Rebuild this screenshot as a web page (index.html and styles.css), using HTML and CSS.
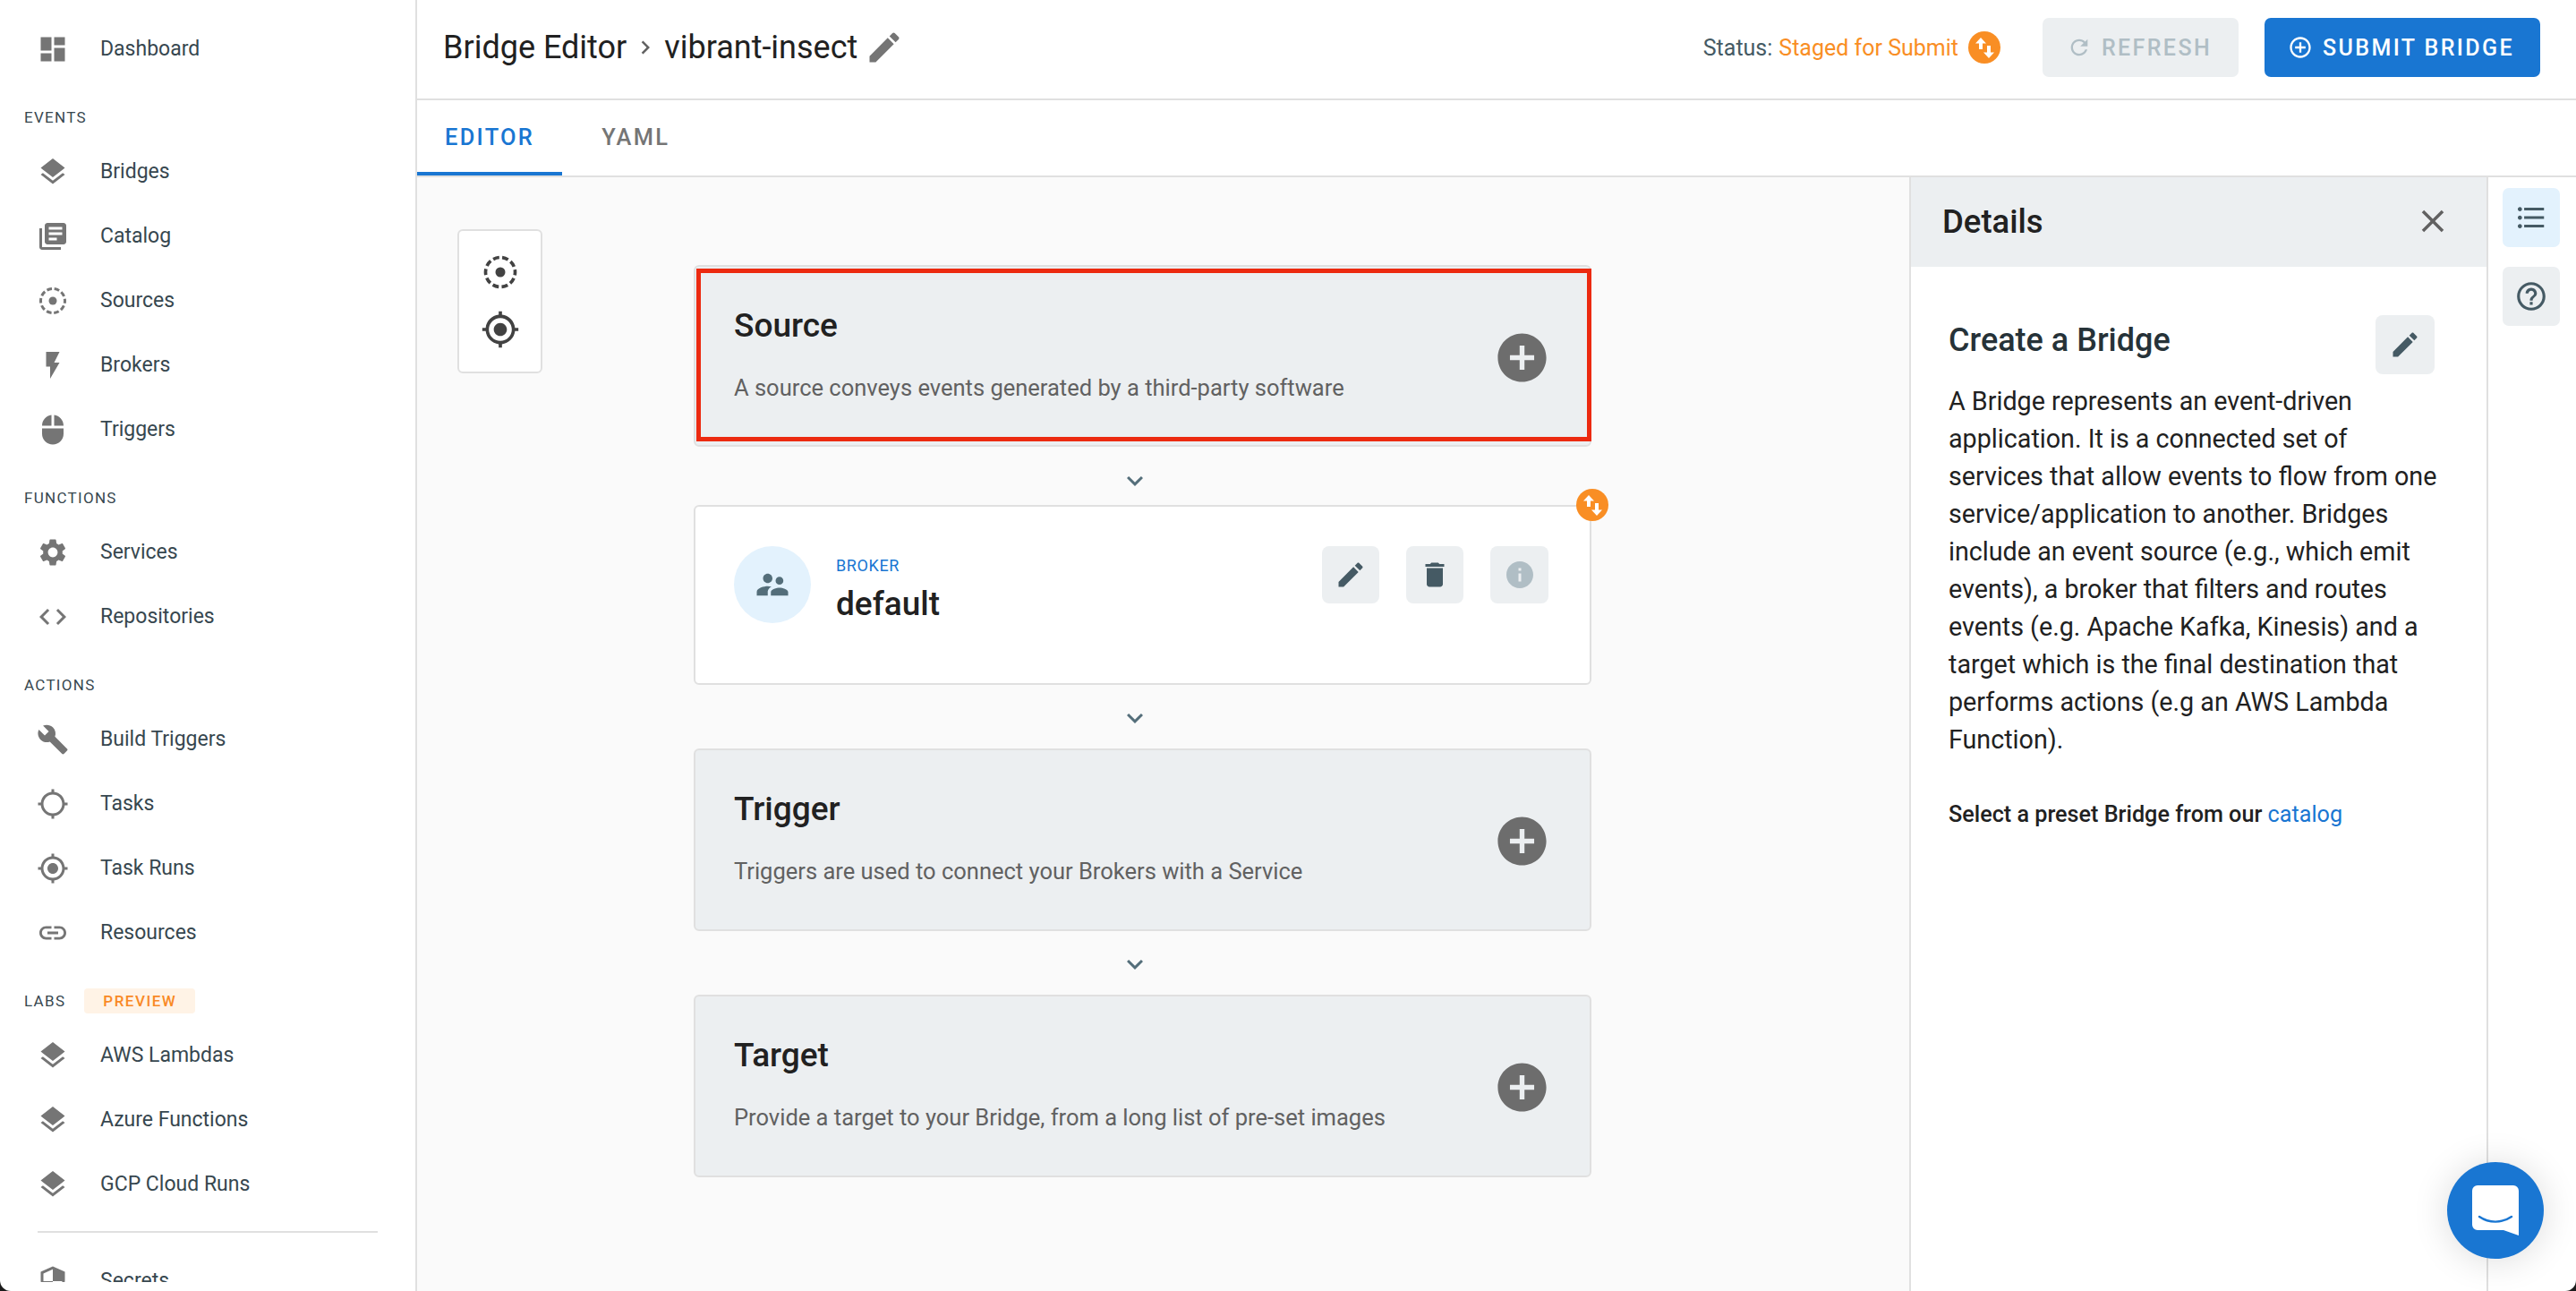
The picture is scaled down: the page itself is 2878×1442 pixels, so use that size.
FILE: index.html
```html
<!DOCTYPE html>
<html lang="en">
<head>
<meta charset="utf-8">
<title>Bridge Editor</title>
<link rel="stylesheet" href="styles.css">
</head>
<body>
<svg class="sprite" aria-hidden="true">
  <symbol id="i-dashboard" viewBox="0 0 24 24"><path d="M3 13h8V3H3v10zm0 8h8v-6H3v6zm10 0h8V11h-8v10zm0-18v6h8V3h-8z"/></symbol>
  <symbol id="i-layers" viewBox="0 0 24 24"><path d="M11.99 18.54l-7.37-5.73L3 14.07l9 7 9-7-1.63-1.27-7.38 5.74zM12 16l7.36-5.73L21 9l-9-7-9 7 1.63 1.27L12 16z"/></symbol>
  <symbol id="i-books" viewBox="0 0 24 24"><path d="M4 6H2v14c0 1.1.9 2 2 2h14v-2H4V6zm16-4H8c-1.1 0-2 .9-2 2v12c0 1.1.9 2 2 2h12c1.1 0 2-.9 2-2V4c0-1.1-.9-2-2-2zm-1 9H9V9h10v2zm-4 4H9v-2h6v2zm4-8H9V5h10v2z"/></symbol>
  <symbol id="i-source" viewBox="0 0 24 24"><circle cx="12" cy="12" r="9" fill="none" stroke="currentColor" stroke-width="2" stroke-dasharray="3.8 1.85" stroke-dashoffset="1.9"/><circle cx="12" cy="12" r="3"/></symbol>
  <symbol id="i-flash" viewBox="0 0 24 24"><path d="M7 2v11h3v9l7-12h-4l4-8z"/></symbol>
  <symbol id="i-mouse" viewBox="0 0 24 24"><path d="M13 1.07V9h7c0-4.08-3.05-7.44-7-7.93zM4 15c0 4.42 3.58 8 8 8s8-3.58 8-8v-4H4v4zm7-13.93C7.05 1.56 4 4.92 4 9h7V1.07z"/></symbol>
  <symbol id="i-gear" viewBox="0 0 24 24"><path d="M19.14 12.94c.04-.3.06-.61.06-.94 0-.32-.02-.64-.07-.94l2.03-1.58c.18-.14.23-.41.12-.61l-1.92-3.32c-.12-.22-.37-.29-.59-.22l-2.39.96c-.5-.38-1.03-.7-1.62-.94l-.36-2.54c-.04-.24-.24-.41-.48-.41h-3.84c-.24 0-.43.17-.47.41l-.36 2.54c-.59.24-1.13.57-1.62.94l-2.39-.96c-.22-.08-.47 0-.59.22L2.74 8.87c-.12.21-.08.47.12.61l2.03 1.58c-.05.3-.09.63-.09.94s.02.64.07.94l-2.03 1.58c-.18.14-.23.41-.12.61l1.92 3.32c.12.22.37.29.59.22l2.39-.96c.5.38 1.03.7 1.62.94l.36 2.54c.05.24.24.41.48.41h3.84c.24 0 .44-.17.47-.41l.36-2.54c.59-.24 1.13-.56 1.62-.94l2.39.96c.22.08.47 0 .59-.22l1.92-3.32c.12-.22.07-.47-.12-.61l-2.01-1.58zM12 15.6c-1.98 0-3.6-1.62-3.6-3.6s1.62-3.6 3.6-3.6 3.6 1.62 3.6 3.6-1.62 3.6-3.6 3.6z"/></symbol>
  <symbol id="i-code" viewBox="0 0 24 24"><path d="M9.4 16.6L4.8 12l4.6-4.6L8 6l-6 6 6 6 1.4-1.4zm5.2 0l4.6-4.6-4.6-4.6L16 6l6 6-6 6-1.4-1.4z"/></symbol>
  <symbol id="i-build" viewBox="0 0 24 24"><path d="M22.7 19l-9.1-9.1c.9-2.3.4-5-1.5-6.9-2-2-5-2.4-7.4-1.3L9 6 6 9 1.6 4.7C.4 7.1.9 10.1 2.9 12.1c1.9 1.9 4.6 2.4 6.9 1.5l9.1 9.1c.4.4 1 .4 1.4 0l2.3-2.3c.5-.4.5-1.1.1-1.4z"/></symbol>
  <symbol id="i-gps-off" viewBox="0 0 24 24"><path d="M20.94 11c-.46-4.17-3.77-7.48-7.94-7.94V1h-2v2.06C6.83 3.52 3.52 6.83 3.06 11H1v2h2.06c.46 4.17 3.77 7.48 7.94 7.94V23h2v-2.06c4.17-.46 7.48-3.77 7.94-7.94H23v-2h-2.06zM12 19c-3.87 0-7-3.13-7-7s3.13-7 7-7 7 3.13 7 7-3.13 7-7 7z"/></symbol>
  <symbol id="i-gps" viewBox="0 0 24 24"><path d="M12 8c-2.21 0-4 1.79-4 4s1.79 4 4 4 4-1.79 4-4-1.79-4-4-4zm8.94 3c-.46-4.17-3.77-7.48-7.94-7.94V1h-2v2.06C6.83 3.52 3.52 6.83 3.06 11H1v2h2.06c.46 4.17 3.77 7.48 7.94 7.94V23h2v-2.06c4.17-.46 7.48-3.77 7.94-7.94H23v-2h-2.06zM12 19c-3.87 0-7-3.13-7-7s3.13-7 7-7 7 3.13 7 7-3.13 7-7 7z"/></symbol>
  <symbol id="i-link" viewBox="0 0 24 24"><path d="M3.9 12c0-1.71 1.39-3.1 3.1-3.1h4V7H7c-2.76 0-5 2.24-5 5s2.24 5 5 5h4v-1.9H7c-1.71 0-3.1-1.39-3.1-3.1zM8 13h8v-2H8v2zm9-6h-4v1.9h4c1.71 0 3.1 1.39 3.1 3.1s-1.39 3.1-3.1 3.1h-4V17h4c2.76 0 5-2.24 5-5s-2.24-5-5-5z"/></symbol>
  <symbol id="i-security" viewBox="0 0 24 24"><path d="M12 1L3 5v6c0 5.55 3.84 10.74 9 12 5.16-1.26 9-6.45 9-12V5l-9-4zm0 10.99h7c-.53 4.12-3.28 7.79-7 8.94V12H5V6.3l7-3.11v8.8z"/></symbol>
  <symbol id="i-edit" viewBox="0 0 24 24"><path d="M3 17.25V21h3.75L17.81 9.94l-3.75-3.75L3 17.25zM20.71 7.04c.39-.39.39-1.02 0-1.41l-2.34-2.34c-.39-.39-1.02-.39-1.41 0l-1.83 1.83 3.75 3.75 1.83-1.83z"/></symbol>
  <symbol id="i-delete" viewBox="0 0 24 24"><path d="M6 19c0 1.1.9 2 2 2h8c1.1 0 2-.9 2-2V7H6v12zM19 4h-3.5l-1-1h-5l-1 1H5v2h14V4z"/></symbol>
  <symbol id="i-info" viewBox="0 0 24 24"><path d="M12 2C6.48 2 2 6.48 2 12s4.48 10 10 10 10-4.48 10-10S17.52 2 12 2zm1 15h-2v-6h2v6zm0-8h-2V7h2v2z"/></symbol>
  <symbol id="i-add" viewBox="0 0 24 24"><path d="M12 2C6.48 2 2 6.48 2 12s4.48 10 10 10 10-4.48 10-10S17.52 2 12 2zm5 11h-4v4h-2v-4H7v-2h4V7h2v4h4v2z"/></symbol>
  <symbol id="i-add-o" viewBox="0 0 24 24"><path d="M13 7h-2v4H7v2h4v4h2v-4h4v-2h-4V7zm-1-5C6.48 2 2 6.48 2 12s4.48 10 10 10 10-4.48 10-10S17.52 2 12 2zm0 18c-4.41 0-8-3.59-8-8s3.59-8 8-8 8 3.59 8 8-3.59 8-8 8z"/></symbol>
  <symbol id="i-refresh" viewBox="0 0 24 24"><path d="M17.65 6.35C16.2 4.9 14.21 4 12 4c-4.42 0-7.99 3.58-7.99 8s3.57 8 7.99 8c3.73 0 6.84-2.55 7.73-6h-2.08c-.82 2.33-3.04 4-5.65 4-3.31 0-6-2.69-6-6s2.69-6 6-6c1.66 0 3.14.69 4.22 1.78L13 11h7V4l-2.35 2.35z"/></symbol>
  <symbol id="i-close" viewBox="0 0 24 24"><path d="M19 6.41L17.59 5 12 10.59 6.41 5 5 6.41 10.59 12 5 17.59 6.41 19 12 13.41 17.59 19 19 17.59 13.41 12z"/></symbol>
  <symbol id="i-list" viewBox="0 0 24 24"><path d="M4 10.5c-.83 0-1.5.67-1.5 1.5s.67 1.5 1.5 1.5 1.5-.67 1.5-1.5-.67-1.5-1.5-1.5zm0-6c-.83 0-1.5.67-1.5 1.5S3.17 7.5 4 7.5 5.5 6.83 5.5 6 4.83 4.5 4 4.5zm0 12c-.83 0-1.5.68-1.5 1.5s.68 1.5 1.5 1.5 1.5-.68 1.5-1.5-.67-1.5-1.5-1.5zM7 19h14v-2H7v2zm0-6h14v-2H7v2zm0-8v2h14V5H7z"/></symbol>
  <symbol id="i-help" viewBox="0 0 24 24"><path d="M11 18h2v-2h-2v2zm1-16C6.48 2 2 6.48 2 12s4.48 10 10 10 10-4.48 10-10S17.52 2 12 2zm0 18c-4.41 0-8-3.59-8-8s3.59-8 8-8 8 3.59 8 8-3.59 8-8 8zm0-14c-2.21 0-4 1.79-4 4h2c0-1.1.9-2 2-2s2 .9 2 2c0 2-3 1.75-3 5h2c0-2.25 3-2.5 3-5 0-2.21-1.79-4-4-4z"/></symbol>
  <symbol id="i-people" viewBox="0 0 24 24"><path d="M16.5 12c1.38 0 2.49-1.12 2.49-2.5S17.88 7 16.5 7C15.12 7 14 8.12 14 9.5s1.12 2.5 2.5 2.5zM9 11c1.66 0 2.99-1.34 2.99-3S10.66 5 9 5C7.34 5 6 6.34 6 8s1.34 3 3 3zm7.5 3c-1.83 0-5.5.92-5.5 2.75V19h11v-2.25c0-1.83-3.67-2.75-5.5-2.75zM9 13c-2.33 0-7 1.17-7 3.5V19h7v-2.25c0-.85.33-2.34 2.37-3.47C10.5 13.1 9.66 13 9 13z"/></symbol>
  <symbol id="i-swap" viewBox="0 0 36 36"><path d="M14 7l6 6.5h-4V20h-4v-6.5H8zM21 16h4v7.5h4L23 30l-6-6.5h4z"/></symbol>
  <symbol id="i-chevron" viewBox="0 0 24 24"><path d="M16.59 8.59L12 13.17 7.41 8.59 6 10l6 6 6-6z"/></symbol>
  <symbol id="i-right" viewBox="0 0 24 24"><path d="M10 6L8.59 7.41 13.17 12l-4.58 4.59L10 18l6-6z"/></symbol>
</svg>

<div class="app">
  <aside class="sidebar">
    <nav class="nav">
      <a class="nav-item"><svg class="nav-icon"><use href="#i-dashboard"/></svg><span>Dashboard</span></a>
      <div class="nav-label">EVENTS</div>
      <a class="nav-item"><svg class="nav-icon"><use href="#i-layers"/></svg><span>Bridges</span></a>
      <a class="nav-item"><svg class="nav-icon"><use href="#i-books"/></svg><span>Catalog</span></a>
      <a class="nav-item"><svg class="nav-icon"><use href="#i-source"/></svg><span>Sources</span></a>
      <a class="nav-item"><svg class="nav-icon"><use href="#i-flash"/></svg><span>Brokers</span></a>
      <a class="nav-item"><svg class="nav-icon"><use href="#i-mouse"/></svg><span>Triggers</span></a>
      <div class="nav-label">FUNCTIONS</div>
      <a class="nav-item"><svg class="nav-icon"><use href="#i-gear"/></svg><span>Services</span></a>
      <a class="nav-item"><svg class="nav-icon"><use href="#i-code"/></svg><span>Repositories</span></a>
      <div class="nav-label">ACTIONS</div>
      <a class="nav-item"><svg class="nav-icon"><use href="#i-build"/></svg><span>Build Triggers</span></a>
      <a class="nav-item"><svg class="nav-icon"><use href="#i-gps-off"/></svg><span>Tasks</span></a>
      <a class="nav-item"><svg class="nav-icon"><use href="#i-gps"/></svg><span>Task Runs</span></a>
      <a class="nav-item"><svg class="nav-icon"><use href="#i-link"/></svg><span>Resources</span></a>
      <div class="nav-label">LABS <span class="preview">PREVIEW</span></div>
      <a class="nav-item"><svg class="nav-icon"><use href="#i-layers"/></svg><span>AWS Lambdas</span></a>
      <a class="nav-item"><svg class="nav-icon"><use href="#i-layers"/></svg><span>Azure Functions</span></a>
      <a class="nav-item"><svg class="nav-icon"><use href="#i-layers"/></svg><span>GCP Cloud Runs</span></a>
      <hr class="nav-rule">
      <a class="nav-item"><svg class="nav-icon"><use href="#i-security"/></svg><span>Secrets</span></a>
    </nav>
  </aside>

  <main class="main">
    <header class="header">
      <h1 class="crumbs">
        <span>Bridge Editor</span>
        <svg class="crumb-sep"><use href="#i-right"/></svg>
        <span>vibrant-insect</span>
        <svg class="crumb-edit"><use href="#i-edit"/></svg>
      </h1>
      <div class="status">
        <span class="status-key">Status:</span>
        <span class="status-value">Staged for Submit</span>
        <span class="swap-badge status-badge"><svg><use href="#i-swap"/></svg></span>
      </div>
      <button class="btn btn-refresh"><svg><use href="#i-refresh"/></svg>REFRESH</button>
      <button class="btn btn-submit"><svg><use href="#i-add-o"/></svg>SUBMIT BRIDGE</button>
    </header>

    <div class="tabs">
      <div class="tab tab-active">EDITOR</div>
      <div class="tab">YAML</div>
    </div>

    <div class="workspace">
      <section class="canvas">
        <div class="toolbox">
          <svg><use href="#i-source"/></svg>
          <svg><use href="#i-gps"/></svg>
        </div>
        <div class="stack">
          <article class="card card-empty card-source">
            <div class="highlight"></div>
            <div class="card-text">
              <h2>Source</h2>
              <p>A source conveys events generated by a third-party software</p>
            </div>
            <svg class="card-add"><use href="#i-add"/></svg>
          </article>
          <svg class="chevron chevron-first"><use href="#i-chevron"/></svg>
          <article class="card card-broker">
            <div class="avatar"><svg><use href="#i-people"/></svg></div>
            <div class="broker-text">
              <div class="broker-kind">BROKER</div>
              <div class="broker-name">default</div>
            </div>
            <div class="broker-actions">
              <span class="square"><svg><use href="#i-edit"/></svg></span>
              <span class="square"><svg><use href="#i-delete"/></svg></span>
              <span class="square square-muted"><svg><use href="#i-info"/></svg></span>
            </div>
            <span class="swap-badge swap-corner"><svg><use href="#i-swap"/></svg></span>
          </article>
          <svg class="chevron"><use href="#i-chevron"/></svg>
          <article class="card card-empty">
            <div class="card-text">
              <h2>Trigger</h2>
              <p>Triggers are used to connect your Brokers with a Service</p>
            </div>
            <svg class="card-add"><use href="#i-add"/></svg>
          </article>
          <svg class="chevron"><use href="#i-chevron"/></svg>
          <article class="card card-empty">
            <div class="card-text">
              <h2>Target</h2>
              <p>Provide a target to your Bridge, from a long list of pre-set images</p>
            </div>
            <svg class="card-add"><use href="#i-add"/></svg>
          </article>
        </div>
      </section>

      <aside class="details">
        <div class="details-head">
          <h2>Details</h2>
          <svg><use href="#i-close"/></svg>
        </div>
        <div class="details-body">
          <div class="details-title">
            <h3>Create a Bridge</h3>
            <span class="square square-lg"><svg><use href="#i-edit"/></svg></span>
          </div>
          <p class="details-copy">A Bridge represents an event-driven application. It is a connected set of services that allow events to flow from one service/application to another. Bridges include an event source (e.g., which emit events), a broker that filters and routes events (e.g. Apache Kafka, Kinesis) and a target which is the final destination that performs actions (e.g an AWS Lambda Function).</p>
          <p class="details-preset">Select a preset Bridge from our <a class="link">catalog</a></p>
        </div>
      </aside>

      <div class="rail">
        <span class="rail-btn rail-active"><svg><use href="#i-list"/></svg></span>
        <span class="rail-btn rail-help"><svg><use href="#i-help"/></svg></span>
      </div>
    </div>
  </main>

  <div class="chat">
    <svg viewBox="0 0 52 56"><path d="M6 0h40a6 6 0 0 1 6 6v50l-17-6H6a6 6 0 0 1-6-6V6a6 6 0 0 1 6-6z" fill="#fff"/><path d="M8 35c11 7.5 25 7.5 36 0" fill="none" stroke="#1976d2" stroke-width="2.4" stroke-linecap="round"/></svg>
  </div>
</div>
</body>
</html>
```
FILE: styles.css
```css
* { box-sizing: border-box; }
html, body { margin: 0; padding: 0; background: #1b1b1b; }
body { font-family: Roboto, "Liberation Sans", sans-serif; color: #212121; }
.sprite { display: none; }
svg { fill: currentColor; display: block; flex: none; }
h1, h2, h3, p { margin: 0; }

.app {
  position: relative;
  display: flex;
  width: 2878px;
  height: 1442px;
  background: #fff;
  overflow: hidden;
  border-radius: 0 0 12px 12px;
}

/* Sidebar */
.sidebar {
  width: 466px;
  flex: none;
  height: 100%;
  border-right: 2px solid #e0e0e0;
  padding-bottom: 10px;
}
.nav { height: 100%; overflow: hidden; padding-top: 18px; }
.nav-item {
  display: flex;
  align-items: center;
  height: 72px;
  padding: 1px 0 0 41px;
  gap: 35px;
  font-size: 23px;
  color: #37474f;
}
.nav-icon { width: 36px; height: 36px; color: #757575; }
.nav-label {
  display: flex;
  align-items: center;
  height: 65px;
  padding: 28px 0 11px 27px;
  font-size: 17px;
  line-height: 24px;
  letter-spacing: 1.3px;
  color: #37474f;
}
.preview {
  display: flex;
  align-items: center;
  justify-content: center;
  width: 124px;
  height: 28px;
  margin-left: 21px;
  border-radius: 4px;
  background: #fff3e6;
  color: #f98a25;
  font-size: 17px;
  font-weight: 500;
  letter-spacing: 1.5px;
}
.nav-rule {
  height: 2px;
  margin: 17px 42px 17px;
  border: 0;
  background: #e0e0e0;
}

/* Main */
.main { flex: 1; min-width: 0; display: flex; flex-direction: column; }
.header {
  display: flex;
  align-items: center;
  height: 112px;
  flex: none;
  padding: 0 40px 4px 29px;
  border-bottom: 2px solid #e0e0e0;
}
.crumbs {
  display: flex;
  align-items: center;
  font-size: 36px;
  font-weight: 400;
  color: #212121;
  margin-right: auto;
}
.crumb-sep { width: 30px; height: 30px; margin: 0 6px; color: #616161; }
.crumb-edit { width: 44px; height: 44px; margin-left: 8px; color: #757575; }
.status { display: flex; align-items: center; font-size: 25px; gap: 7px; color: #455a64; margin-right: 47px; }
.status-value { color: #f98e24; }
.status-badge { margin-left: 4px; }
.swap-badge {
  display: flex;
  align-items: center;
  justify-content: center;
  width: 36px;
  height: 36px;
  border-radius: 50%;
  background: #f98e24;
  color: #fff;
}
.swap-badge svg { width: 36px; height: 36px; }
.btn {
  display: flex;
  align-items: center;
  justify-content: center;
  height: 66px;
  padding: 0 3px 0 0;
  border: 0;
  border-radius: 7px;
  font-family: inherit;
  font-size: 25px;
  font-weight: 500;
  letter-spacing: 2.4px;
}
.btn svg { width: 28px; height: 28px; margin-right: 11px; }
.btn-refresh { width: 219px; background: #eceff1; color: #b0bec5; }
.btn-submit { width: 308px; margin-left: 29px; background: #1976d2; color: #fff; }

.tabs {
  display: flex;
  flex: none;
  height: 86px;
  border-bottom: 2px solid #e0e0e0;
}
.tab {
  display: flex;
  align-items: center;
  padding: 2px 31px 0;
  font-size: 25.4px;
  font-weight: 500;
  letter-spacing: 2.3px;
  color: #757575;
  border-bottom: 4px solid transparent;
}
.tab + .tab { margin-left: 13px; }
.tab-active { color: #1976d2; border-bottom-color: #1976d2; }

.workspace { flex: 1; display: flex; min-height: 0; }

/* Canvas */
.canvas {
  flex: 1;
  min-width: 0;
  display: flex;
  align-items: flex-start;
  padding: 58px 0 0 45px;
  background: #fafafa;
}
.toolbox {
  width: 95px;
  height: 161px;
  flex: none;
  display: flex;
  flex-direction: column;
  align-items: center;
  gap: 20px;
  padding-top: 24px;
  background: #fff;
  border: 2px solid #e0e0e0;
  border-radius: 6px;
  color: #424242;
}
.toolbox svg { width: 44px; height: 44px; }
.stack { flex: none; width: 1003px; margin: 40px 0 0 169px; display: flex; flex-direction: column; }
.card {
  position: relative;
  height: 204px;
  flex: none;
  display: flex;
  border: 2px solid #e0e0e0;
  border-radius: 6px;
}
.card-empty { align-items: flex-start; padding-left: 43px; background: #eceff1; }
.card-source { height: 203px; }
.highlight {
  position: absolute;
  left: 1px;
  right: -2px;
  top: 2px;
  bottom: 4px;
  border: 5px solid #ec2a10;
}
.card-text { padding-top: 44px; flex: 1; }
.card-text h2 { font-size: 37px; font-weight: 500; line-height: 44px; color: #212121; }
.card-text p { margin-top: 26px; font-size: 25.5px; line-height: 43px; color: #616161; }
.card-add { width: 65px; height: 65px; margin: 69px 43px 0 0; color: #6d6d6d; }

.chevron { width: 36px; height: 36px; margin: 19px 0 16px 475px; color: #546e7a; }
.chevron-first { margin: 20px 0 9px 475px; }

.card-broker { height: 201px; align-items: flex-start; padding: 44px 46px 0 43px; background: #fff; }
.avatar {
  width: 86px;
  height: 86px;
  flex: none;
  display: flex;
  align-items: center;
  justify-content: center;
  border-radius: 50%;
  background: #e3f2fd;
  color: #546e7a;
}
.avatar svg { width: 42px; height: 42px; }
.broker-text { flex: 1; margin-left: 28px; }
.broker-kind { font-size: 18px; line-height: 24px; color: #1976d2; letter-spacing: .6px; margin-top: 10px; }
.broker-name { font-size: 37px; line-height: 48px; font-weight: 500; margin-top: 7px; }
.broker-actions { display: flex; gap: 30px; }
.square {
  width: 64px;
  height: 64px;
  display: flex;
  align-items: center;
  justify-content: center;
  background: #eceff1;
  border-radius: 8px;
  color: #455a64;
}
.square svg { width: 36px; height: 36px; }
.square-muted { width: 65px; color: #b0bec5; }
.square-lg { height: 66px; width: 66px; flex: none; }
.swap-corner { position: absolute; right: -21px; top: -20px; }

/* Details */
.details {
  width: 647px;
  flex: none;
  border-left: 2px solid #e0e0e0;
  border-right: 2px solid #e0e0e0;
  background: #fff;
}
.details-head {
  display: flex;
  align-items: center;
  justify-content: space-between;
  height: 100px;
  padding: 0 39px 2px 35px;
  background: #eceff1;
}
.details-head h2 { font-size: 36.5px; font-weight: 500; color: #212121; }
.details-head svg { width: 42px; height: 42px; color: #616161; }
.details-body { padding: 54px 0 0 42px; }
.details-title { display: flex; justify-content: space-between; padding-right: 58px; }
.details-title h3 { font-size: 36px; line-height: 56px; font-weight: 500; color: #263238; }
.details-copy { width: 556px; margin-top: 9px; font-size: 28.7px; line-height: 42px; color: #212121; }
.details-preset { margin-top: 42px; font-size: 25.2px; line-height: 42px; font-weight: 500; color: #212121; }
.link { color: #1976d2; font-weight: 400; }

/* Rail */
.rail { flex: none; width: 98px; display: flex; flex-direction: column; gap: 22px; padding: 12px 0 0 16px; }
.rail-btn {
  width: 64px;
  height: 66px;
  display: flex;
  align-items: center;
  justify-content: center;
  border-radius: 7px;
  color: #455a64;
  background: #eceff1;
}
.rail-btn svg { width: 38px; height: 38px; }
.rail-active { background: #e3f2fd; }

/* Chat bubble */
.chat {
  position: absolute;
  left: 2734px;
  top: 1298px;
  width: 108px;
  height: 108px;
  display: flex;
  align-items: center;
  justify-content: center;
  border-radius: 50%;
  background: #1976d2;
  box-shadow: 0 2px 40px rgba(0,0,0,.14);
}
.chat svg { width: 52px; height: 56px; }
```
